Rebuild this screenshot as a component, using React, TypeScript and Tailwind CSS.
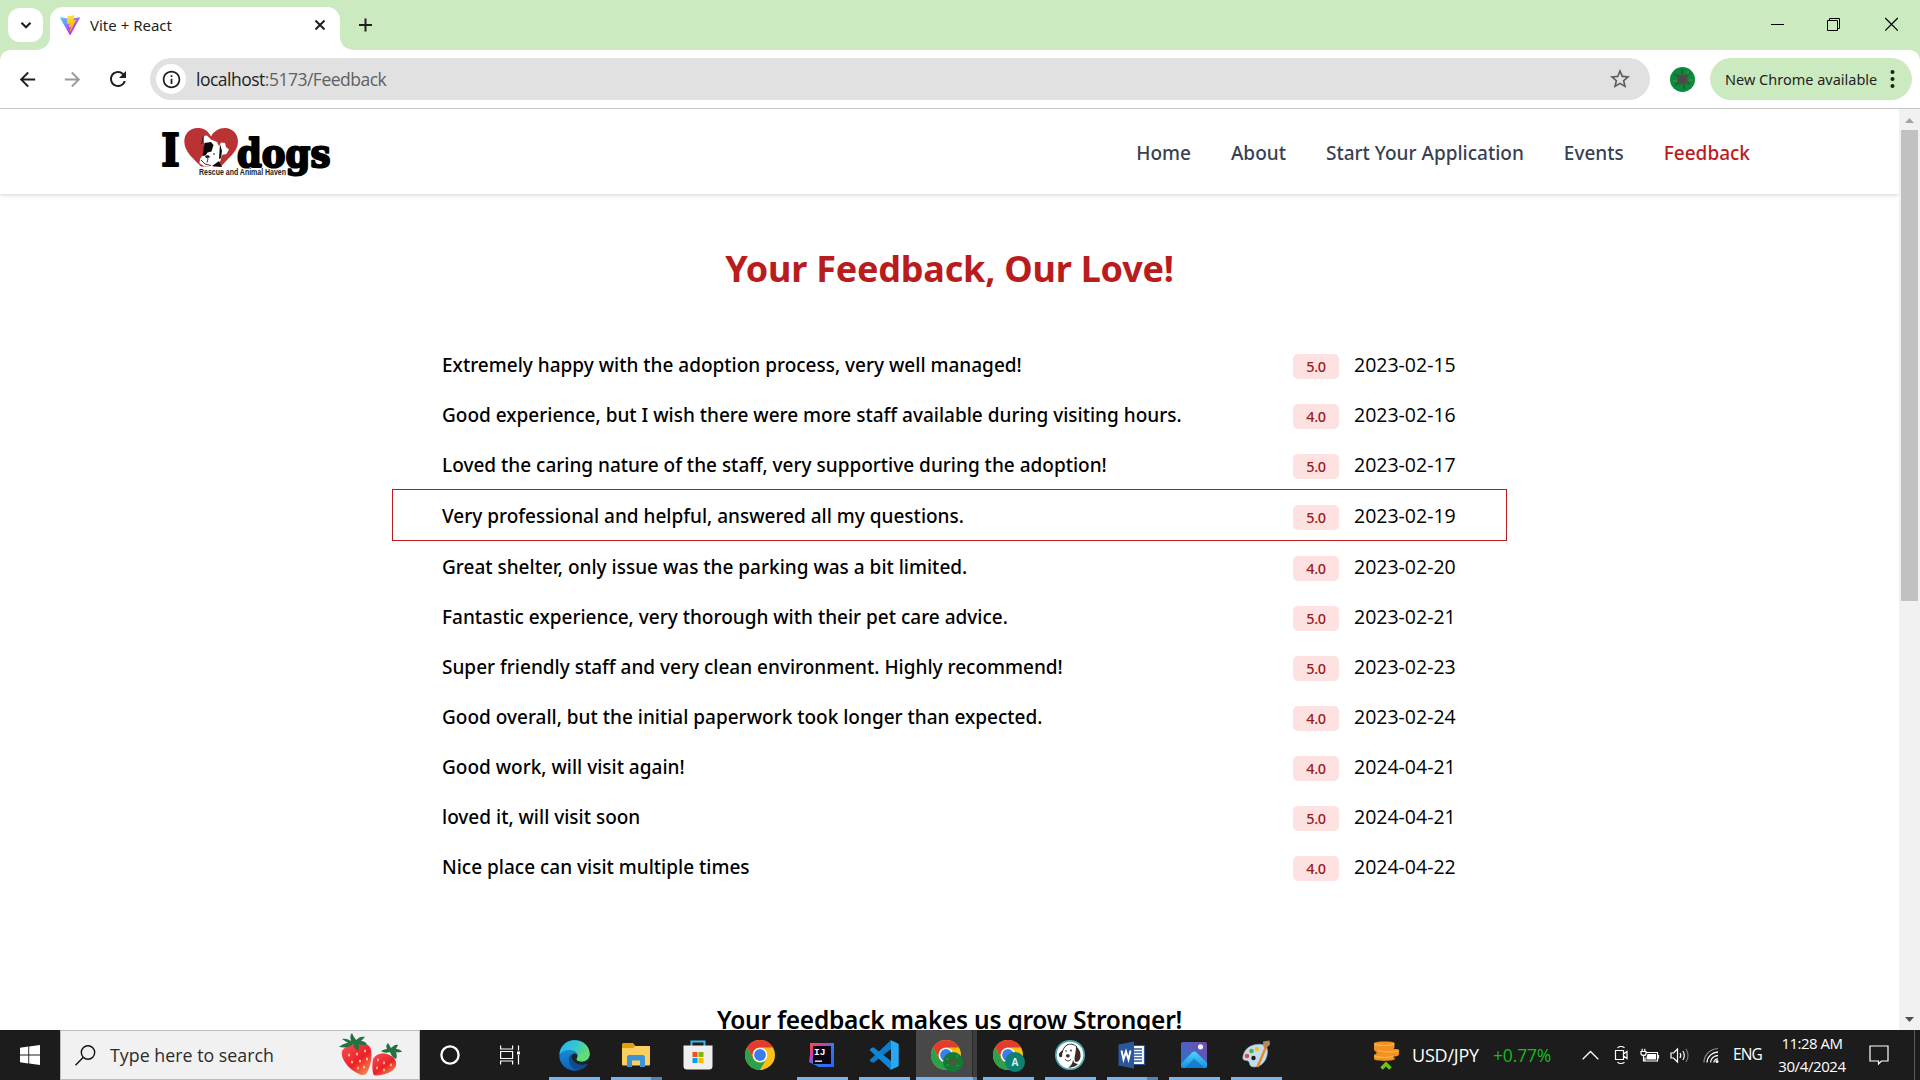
import type { ReactNode } from "react";
import { MdArrowBack, MdArrowForward, MdRefresh, MdStarBorder, MdInfoOutline } from "react-icons/md";

const feedback = [
  { text: "Extremely happy with the adoption process, very well managed!", rating: "5.0", date: "2023-02-15" },
  { text: "Good experience, but I wish there were more staff available during visiting hours.", rating: "4.0", date: "2023-02-16" },
  { text: "Loved the caring nature of the staff, very supportive during the adoption!", rating: "5.0", date: "2023-02-17" },
  { text: "Very professional and helpful, answered all my questions.", rating: "5.0", date: "2023-02-19", active: true },
  { text: "Great shelter, only issue was the parking was a bit limited.", rating: "4.0", date: "2023-02-20" },
  { text: "Fantastic experience, very thorough with their pet care advice.", rating: "5.0", date: "2023-02-21" },
  { text: "Super friendly staff and very clean environment. Highly recommend!", rating: "5.0", date: "2023-02-23" },
  { text: "Good overall, but the initial paperwork took longer than expected.", rating: "4.0", date: "2023-02-24" },
  { text: "Good work, will visit again!", rating: "4.0", date: "2024-04-21" },
  { text: "loved it, will visit soon", rating: "5.0", date: "2024-04-21" },
  { text: "Nice place can visit multiple times", rating: "4.0", date: "2024-04-22" },
];

function ViteLogo() {
  return (
    <svg width="20" height="20" viewBox="0 0 256 257">
      <defs>
        <linearGradient id="viteA" x1="-.8%" x2="57.6%" y1="7.6%" y2="78.4%">
          <stop offset="0" stopColor="#41D1FF" />
          <stop offset="1" stopColor="#BD34FE" />
        </linearGradient>
        <linearGradient id="viteB" x1="43.4%" x2="50.3%" y1="2.2%" y2="89%">
          <stop offset="0" stopColor="#FFEA83" />
          <stop offset=".083" stopColor="#FFDD35" />
          <stop offset="1" stopColor="#FFA800" />
        </linearGradient>
      </defs>
      <path fill="url(#viteA)" d="M255.153 37.938L134.897 252.976c-2.483 4.44-8.862 4.466-11.382.048L.875 37.958c-2.746-4.814 1.371-10.646 6.827-9.67l120.385 21.517a6.537 6.537 0 0 0 2.322-.004l117.867-21.483c5.438-.991 9.574 4.796 6.877 9.62Z" />
      <path fill="url(#viteB)" d="M185.432.063L96.44 17.501a3.268 3.268 0 0 0-2.634 3.014l-5.474 92.456a3.268 3.268 0 0 0 3.997 3.378l24.777-5.718c2.318-.535 4.413 1.507 3.936 3.838l-7.361 36.047c-.495 2.426 1.782 4.5 4.151 3.78l15.304-4.649c2.372-.72 4.652 1.36 4.15 3.788l-11.698 56.621c-.732 3.542 3.979 5.473 5.943 2.437l1.313-2.028l72.516-144.72c1.215-2.423-.88-5.186-3.54-4.672l-25.505 4.922c-2.396.462-4.435-1.77-3.759-4.114l16.646-57.705c.677-2.35-1.37-4.583-3.769-4.113Z" />
    </svg>
  );
}

function TabStrip() {
  return (
    <div className="flex h-[50px] items-start bg-[#cbeabf]">
      <button className="mt-2 ml-2 flex h-[34px] w-[35px] items-center justify-center rounded-[12px] bg-white">
        <svg width="12" height="12" viewBox="0 0 12 12" fill="none" stroke="#1f1f1f" strokeWidth="2.1">
          <path d="M1.5 3.7 6 8.2l4.500-4.500" />
        </svg>
      </button>
      <svg className="mt-[36px] -ml-[8px]" width="15" height="14" viewBox="0 0 15 14" fill="#fff">
        <path d="M15 0v14H0c9 0 15-5 15-14z" />
      </svg>
      <div className="mt-[7px] flex h-[43px] w-[290px] items-center rounded-t-[13px] bg-white pl-[10px]">
        <div className="mb-[7px]"><ViteLogo /></div>
        <span className="mb-[7px] ml-[10px] w-[200px] text-[15px] leading-5 text-[#1f1f1f]">Vite + React</span>
        <svg className="mb-[7px] ml-[25px]" width="10" height="10" viewBox="0 0 10 10" stroke="#1f1f1f" strokeWidth="2">
          <path d="M.5.500 9.500 9.500M9.500.500.500 9.500" />
        </svg>
      </div>
      <svg className="mt-[36px]" width="15" height="14" viewBox="0 0 15 14" fill="#fff">
        <path d="M0 0v14h15C6 14 0 9 0 0z" />
      </svg>
      <svg className="mt-[18px] ml-[4px]" width="13" height="14" viewBox="0 0 13 14" stroke="#1f1f1f" strokeWidth="2">
        <path d="M6.500.5v13M0 7h13" />
      </svg>
      <div className="mt-[17px] ml-auto flex items-center gap-[43px] pr-[22px]">
        <svg width="13" height="14" viewBox="0 0 13 14" stroke="#000"><path d="M0 7.500h13" /></svg>
        <svg className="mr-[2px]" width="13" height="14" viewBox="0 0 13 14" fill="none" stroke="#000">
          <path d="M.5 3.500h10v10H.500zM2.500 3V1.500h10v10H11" />
        </svg>
        <svg width="13" height="14" viewBox="0 0 13 14" stroke="#000" strokeWidth="1.200"><path d="m.2 1 12.600 12.600M12.800 1 .200 13.600" /></svg>
      </div>
    </div>
  );
}

function Toolbar() {
  return (
    <div className="bg-[#cbeabf]">
      <div className="flex h-[59px] items-center rounded-t-[10px] border-b border-[#c6c6c6] bg-white text-[#1f1f1f]">
        <MdArrowBack className="ml-[16px]" size={23} />
        <MdArrowForward className="ml-[22px] text-[#9a9a9a]" size={23} />
        <MdRefresh className="ml-[22px]" size={24} />
        <div className="ml-[20px] flex h-[42px] w-[1500px] items-center rounded-full bg-[#e1e1e1] px-[6px]">
          <span className="flex h-[30px] w-[30px] items-center justify-center rounded-full bg-white">
            <MdInfoOutline size={21} />
          </span>
          <span className="ml-[10px] font-['Open_Sans',sans-serif] text-[17.500px] leading-[24px] tracking-[-0.500px] text-[#5f6062]">
            <span className="text-[#1f1f1f]">localhost</span>:5173/Feedback
          </span>
          <MdStarBorder className="mr-[12px] ml-auto text-[#5a5c5e]" size={24} />
        </div>
        <svg className="ml-[20px]" width="25" height="25" viewBox="0 0 25 25">
          <circle cx="12.500" cy="12.500" r="12.500" fill="#0a8a3e" />
          <path d="M4 8h4v3M20 6l-3 3M5 18l4-3M14 22v-5M20 17l-4-2M12 2v5" stroke="#0b5d2a" strokeWidth="1.100" fill="none" />
          <path d="M3 14h4M18 4v4M19 13h4" stroke="#6d8f2a" strokeWidth=".9" />
          <rect x="7.500" y="7.500" width="10" height="10" rx="1" fill="#5c5136" />
          <rect x="8.500" y="8.500" width="8" height="8" fill="#4b4b4b" />
        </svg>
        <button className="ml-[15px] flex h-[42px] w-[202px] items-center rounded-full bg-[#cbeabf] pl-[15px]">
          <span className="text-[14.500px] leading-5 whitespace-nowrap">New Chrome available</span>
          <svg className="mr-[17px] ml-auto" width="5" height="18" viewBox="0 0 5 18" fill="#1f1f1f">
            <circle cx="2.500" cy="2" r="2" /><circle cx="2.500" cy="9" r="2" /><circle cx="2.500" cy="16" r="2" />
          </svg>
        </button>
      </div>
    </div>
  );
}

function SiteLogo() {
  return (
    <svg className="overflow-visible" width="172" height="54" viewBox="0 0 172 54">
      <g fontFamily="DejaVu Serif, serif" fontWeight="700" stroke="#000" strokeWidth="2.200" strokeLinejoin="round">
        <text x="1.300" y="40.500" fontSize="44" textLength="18.500" lengthAdjust="spacingAndGlyphs">I</text>
        <text x="77" y="42" fontSize="38.500" textLength="93.500" lengthAdjust="spacingAndGlyphs">dogs</text>
      </g>
      <path fill="#b93234" d="M51 11.500C47 4 42 3 37.500 3 30 3 24.300 8.700 24.300 16.500 24.300 27 34 34 41 41.500h20C68 33 78 27 78 16.500 78 8.700 72 3 65 3c-6 0-11 3-14 8.500z" />
      <path fill="#fff" d="m43.500 11 3.500-.5 4 4 6 2.500 2 4 2-3.500 4 .5 1 4 3 2.500-2.500 4.500-4.500 1-2 7-8 5-8-1-4.500-2.500.5-4.500 3-4 1.500-9z" />
      <path fill="#0b0b0b" d="M44.500 18 51 17l2.500 3-2 6.500-4 1-2 3-3 .5 1-7zM60 19l2 7-1 7-2 1 .5-8zM52 41l7-5 3 6z" />
      <path fill="none" stroke="#222" strokeWidth=".9" d="m41 35 4 4 6 1.500M45 31.500l3 2 2-2M48 34l-1 3.500M43.500 11l-2 8" />
      <ellipse cx="47.500" cy="31.500" rx="1.800" ry="1.300" fill="#111" />
      <circle cx="54" cy="29" r=".8" fill="#111" />
      <text x="39" y="50" fontSize="8.500" fontFamily="Liberation Sans, sans-serif" fontWeight="700" fill="#222" stroke="#fff" strokeWidth="1" paintOrder="stroke" textLength="87" lengthAdjust="spacingAndGlyphs">Rescue and Animal Haven</text>
    </svg>
  );
}

const navItem = "text-[#374151]";
function Navbar() {
  return (
    <header className="flex h-[85px] shrink-0 items-center justify-between bg-white pr-[149px] pl-[160px] shadow-[0_1px_4px_rgba(0,0,0,0.18)]">
      <SiteLogo />
      <nav className="flex gap-[40px] pt-[2px] text-[19px] leading-[26px] font-medium">
        <a className={navItem}>Home</a>
        <a className={navItem}>About</a>
        <a className={navItem}>Start Your Application</a>
        <a className={navItem}>Events</a>
        <a className="text-[#b91c1c]">Feedback</a>
      </nav>
    </header>
  );
}

function FeedbackRow({ text, rating, date, active }: { text: string; rating: string; date: string; active?: boolean }) {
  return (
    <li className={active ? "flex h-[52px] items-center border border-[#b91c1c] pr-[50px] pl-[49px]" : "flex h-[50px] items-center pr-[51px] pl-[50px]"}>
      <span className="pt-[2px] text-[19px] leading-[26px] font-medium">{text}</span>
      <span className="mt-[5px] ml-auto flex h-[25px] w-[46px] items-center justify-center rounded-[5px] bg-[#fee2e2] pt-px text-[14.500px] font-medium tracking-[-0.300px] text-[#991b1b]">
        {rating}
      </span>
      <span className="ml-[15px] w-[102px] pt-[2px] font-['Open_Sans',sans-serif] text-[19.500px] leading-[26px] whitespace-nowrap">{date}</span>
    </li>
  );
}

function Scrollbar() {
  return (
    <div className="flex w-[21px] flex-col items-center bg-[#f1f1f1]">
      <svg className="mt-[9px]" width="9" height="5" viewBox="0 0 9 5" fill="#a3a3a3"><path d="M0 5 4.500 0 9 5z" /></svg>
      <div className="mt-[7px] h-[471px] w-[17px] bg-[#c1c1c1]" />
      <svg className="mt-auto mb-[8px]" width="9" height="5" viewBox="0 0 9 5" fill="#505050"><path d="M0 0h9L4.500 5z" /></svg>
    </div>
  );
}

function ChromeIcon({ children }: { children?: ReactNode }) {
  return (
    <svg width="34" height="34" viewBox="0 0 34 34">
      <circle cx="15" cy="16" r="15" fill="#fbc116" />
      <path fill="#e33b2e" d="M2 8.500a15 15 0 0 1 26 0H15a7.500 7.500 0 0 0-6.500 11.200z" />
      <path fill="#2da04b" d="M2 8.500 8.500 19.700A7.500 7.500 0 0 0 15 23.500a7 7 0 0 0 6.500-3.800L15 31A15 15 0 0 1 2 8.500z" />
      <circle cx="15" cy="16" r="7.300" fill="#fff" />
      <circle cx="15" cy="16" r="5.900" fill="#3c7ded" />
      {children}
    </svg>
  );
}

function EdgeIcon() {
  return (
    <svg width="31" height="31" viewBox="0 0 256 256">
      <defs>
        <linearGradient id="edgeTop" x1="0" y1=".3" x2="1" y2=".6">
          <stop offset="0" stopColor="#2bb3e8" /><stop offset=".5" stopColor="#37c6d0" /><stop offset="1" stopColor="#70e05a" />
        </linearGradient>
        <linearGradient id="edgeLeft" x1=".4" y1="0" x2=".5" y2="1">
          <stop offset="0" stopColor="#1b9de2" /><stop offset="1" stopColor="#0c5fb5" />
        </linearGradient>
      </defs>
      <circle cx="128" cy="128" r="125" fill="url(#edgeLeft)" />
      <path fill="url(#edgeTop)" d="M4 118C10 45 65 3 128 3c75 0 125 52 125 108 0 42-32 66-66 66-26 0-42-8-42-18 0-8 10-12 10-29 0-24-26-48-66-48-42 0-70 16-85 36z" />
      <path fill="#0f4a8e" d="M100 118c-12 12-20 30-18 52 4 44 42 82 90 76 30-6 56-28 68-52 2-5-2-8-7-5-40 22-110 12-128-30-5-14-8-28-5-41z" />
      <path fill="#1c1c1c" d="M252 130c-4 30-32 52-65 47-26 0-42-8-42-18 0-8 12-14 9-34-14-22-40-16-51 2-8 50 50 80 94 77 30-2 44-10 48-9 8-14 12-36 7-65z" opacity=".9" />
      <path fill="#62dd72" d="M253 111c0 42-32 66-66 66-26 0-42-8-42-18 0-8 12-14 9-34 40-20 80-20 99-14z" />
    </svg>
  );
}

function FolderIcon() {
  return (
    <svg width="30" height="26" viewBox="0 0 30 26">
      <path fill="#e3a008" d="M1 2.500C1 1.700 1.700 1 2.500 1H12l2.500 3H28v8H1z" />
      <path fill="#fbd061" d="M1 6h11l2.500-2H29v18.500a1 1 0 0 1-1 1H2a1 1 0 0 1-1-1z" />
      <path fill="#3b93d8" d="M6 25V15.500C6 14 7 13 8.500 13h13c1.500 0 2.500 1 2.500 2.500V25h-5v-6.500h-8V25z" />
    </svg>
  );
}

function StoreIcon() {
  return (
    <svg width="30" height="30" viewBox="0 0 30 30">
      <path d="M8.500 6.500V1.500h13v5" fill="none" stroke="#38b6ef" strokeWidth="2" />
      <path d="M.5 5.500h29V26a3.500 3.500 0 0 1-3.500 3.500H4A3.500 3.500 0 0 1 .5 26z" fill="#efefef" />
      <path fill="#f1511b" d="M9.500 12h5v5h-5z" /><path fill="#80bb01" d="M15.500 12h5v5h-5z" />
      <path fill="#00a3ee" d="M9.500 18h5v5h-5z" /><path fill="#fbb800" d="M15.500 18h5v5h-5z" />
    </svg>
  );
}

function IntelliJIcon() {
  return (
    <svg width="26" height="26" viewBox="0 0 26 26">
      <defs>
        <linearGradient id="ij" x1="0" y1="0" x2="1" y2="1">
          <stop offset="0" stopColor="#ee5a3a" /><stop offset=".25" stopColor="#e8368f" /><stop offset=".55" stopColor="#2f7bf6" /><stop offset="1" stopColor="#2b63ee" />
        </linearGradient>
      </defs>
      <path fill="url(#ij)" d="M1 1h24v24H10L0 20 1 12z" />
      <path fill="#0c0413" d="M4 4h18v18H4z" />
      <text x="5" y="13" fontSize="9.500" fontWeight="700" fill="#fff" fontFamily="Liberation Mono, monospace">IJ</text>
      <path fill="#fff" d="M6 18.500h7v1.300H6z" />
    </svg>
  );
}

function VsCodeIcon() {
  return (
    <svg width="30" height="30" viewBox="0 0 30 30">
      <path fill="#0d7dcb" d="M22 0.500v8.500L4.500 22.800 2.300 22 .5 20.200 21 .9z" />
      <path fill="#0f87d8" d="M.5 10 2.300 8l2.200-.7L22 21v8.500L21 29z" />
      <path fill="#29a7f2" d="M22 .2 29 3.500c.5.300.7.700.7 1.200v20.600c0 .5-.2 1-.7 1.200L22 29.800c-.6.200-1 0-1.300-.3.700.4 1.300 0 1.300-.8V1.300C22 .5 21.400.1 20.700.5 21 .2 21.400 0 22 .2z" />
    </svg>
  );
}

function DogIcon() {
  return (
    <svg width="30" height="30" viewBox="0 0 30 30">
      <circle cx="15" cy="15" r="14.200" fill="#fff" stroke="#46a8ae" strokeWidth="1.700" />
      <path fill="none" stroke="#3a2b25" strokeWidth="1" d="M12 5c-3 1.500-4 5-5 8M12 5c3-1.500 7-1 10 2M10 19c1.500 2.500 4 2.500 6 .5" />
      <path fill="#3a2b25" d="M21 6.500c3 2 5 5.500 4.500 10.500-.3 3-2.500 5-4.800 5-1.700-1.500-1.200-4.500-.7-7 .5-3 1-5 1-8.500zM4 13.500 7.500 10 7.200 16c-.7 2-3 1.500-3.200-.5zM11 15c1-1 3.200-1 3.700.2.200 1.600-.9 2.400-2 2.300-1.200-.2-2-1.200-1.700-2.500zM13 27.500c3-1.500 4.500-4 5-7.500l1.500 3 3.500 1c-2 2.500-6 4-10 3.500z" />
      <circle cx="11" cy="11" r=".8" fill="#3a2b25" /><circle cx="16" cy="10.500" r=".9" fill="#3a2b25" />
    </svg>
  );
}

function WordIcon() {
  return (
    <svg width="28" height="28" viewBox="0 0 28 28">
      <path fill="#fff" stroke="#2b579a" strokeWidth="1.200" d="M14 4.500h12.500v19H14z" />
      <path stroke="#2b579a" strokeWidth="1.500" d="M15 8h9M15 11h9M15 14h9M15 17h9M15 20h9" />
      <path fill="#2b579a" d="M.5 3.500 16 .5v27L.5 24.500z" />
      <path d="m3.500 9.500 2 9 2.500-8 2.500 8 2-9" stroke="#fff" strokeWidth="1.900" fill="none" />
    </svg>
  );
}

function PhotosIcon() {
  return (
    <svg width="26" height="26" viewBox="0 0 26 26">
      <defs>
        <linearGradient id="phBg" x1="0" y1="1" x2="1" y2="0"><stop offset="0" stopColor="#1f78d6" /><stop offset="1" stopColor="#7a4aa6" /></linearGradient>
        <linearGradient id="phHill" x1="0" y1="0" x2="0" y2="1"><stop offset="0" stopColor="#4fd6fb" /><stop offset="1" stopColor="#1590e0" /></linearGradient>
      </defs>
      <rect width="26" height="26" rx="2" fill="url(#phBg)" />
      <path fill="url(#phHill)" d="M0 22 11 10.500c1.500-1.500 3-1.500 4.500 0L26 21v3a2 2 0 0 1-2 2H2a2 2 0 0 1-2-2z" />
      <path fill="#0f70ca" d="m4 26 9-9.500L23.500 26z" opacity=".7" />
      <circle cx="19.500" cy="4.800" r="2.600" fill="#e9f3ff" />
    </svg>
  );
}

function PaintIcon() {
  return (
    <svg width="30" height="30" viewBox="0 0 30 30">
      <path fill="#c4dcec" stroke="#8fb0c6" strokeWidth=".6" d="M3 13C6 6 14 3.500 21 4.500c5 1 6.500 5 5 11-1.500 7-7 11.500-13 11.500-4.500 0-4-3-5-5s-3-1-5-2c-2-1.200-1-4.500 0-7z" />
      <circle cx="6" cy="16" r="2.300" fill="#e34b3c" /><circle cx="10.500" cy="11" r="2.300" fill="#4bb14c" />
      <circle cx="16" cy="9" r="2.300" fill="#f0c52e" /><circle cx="12.500" cy="18" r="2.200" fill="#1c1c1c" />
      <path stroke="#e58a24" strokeWidth="2.400" d="M25 7 16.500 27" />
      <path fill="#b78a55" d="m22 1.500 6.500-1 .5 4-4.500 4.500-2-2.500z" />
    </svg>
  );
}

function Strawberries() {
  return (
    <svg width="64" height="44" viewBox="0 0 64 44">
      <defs>
        <linearGradient id="berry" x1="0" y1="0" x2=".8" y2="1"><stop offset="0" stopColor="#f5515b" /><stop offset=".6" stopColor="#ee1f2c" /><stop offset="1" stopColor="#f58a52" /></linearGradient>
      </defs>
      <path fill="url(#berry)" d="M4 18c3-6 21-11 27-5 5 5 2 22-3 28-2 2-5 1-8-.5C12 37 2 26 4 18z" />
      <path fill="url(#berry)" d="M35 26c3-5 9-7 14-5 7 2 10 7 9 12-2 6-14 10-21 9.500-3-.5-3-10-2-16.500z" />
      <g fill="#fbd667">
        <ellipse cx="11" cy="22" rx="1" ry="1.600" /><ellipse cx="19" cy="21" rx="1" ry="1.600" /><ellipse cx="27" cy="18" rx="1" ry="1.600" />
        <ellipse cx="14" cy="29" rx="1" ry="1.600" /><ellipse cx="22" cy="28" rx="1" ry="1.600" /><ellipse cx="29" cy="26" rx="1" ry="1.600" />
        <ellipse cx="20" cy="35" rx="1" ry="1.600" /><ellipse cx="26" cy="34" rx="1" ry="1.600" />
        <ellipse cx="40" cy="27" rx=".9" ry="1.400" /><ellipse cx="46" cy="30" rx=".9" ry="1.400" /><ellipse cx="53" cy="32" rx=".9" ry="1.400" />
        <ellipse cx="39" cy="35" rx=".9" ry="1.400" /><ellipse cx="46" cy="37" rx=".9" ry="1.400" />
      </g>
      <path fill="#23723f" d="M1 14c4-3 6-4 9-4L4 6c4-1 7 1 9 2-1-4-1-6 1-8 1 3 3 5 4 7 3-3 6-4 9-3-2 2-3 3-4 4 3 0 5 1 6 4-4 0-6 0-8-1 0 3 0 5-1 7-3-2-4-4-5-7-3 3-6 4-14 3z" />
      <path fill="#23723f" d="M43 18c2-1 4-2 6-2-1-2-1-4 1-6l3 5c3-3 5-4 7-3l-2 4c3 0 5 1 6 3-3 0-4 1-6 0 1 3 1 5 0 7-3-1-5-4-6-7-3 1-6 1-9-1z" />
    </svg>
  );
}

type AppEntry = { icon: ReactNode; open?: boolean; stacked?: boolean; active?: boolean };
const apps: AppEntry[] = [
  { icon: <EdgeIcon />, open: true },
  { icon: <FolderIcon />, open: true, stacked: true },
  { icon: <StoreIcon /> },
  { icon: <span className="pt-[2px] pl-[4px]"><ChromeIcon /></span> },
  { icon: <IntelliJIcon />, open: true },
  { icon: <VsCodeIcon />, open: true },
  {
    icon: (
      <span className="pt-[2px] pl-[4px]">
        <ChromeIcon>
          <circle cx="22" cy="23" r="10" fill="#127a34" />
          <path d="M15 20h3M26 16v3M15 27l3-2M28 27l-3-1" stroke="#3f9a3a" />
          <rect x="18.500" y="19.500" width="7" height="7" rx="1" fill="#4b5a3c" />
        </ChromeIcon>
      </span>
    ),
    open: true, stacked: true, active: true,
  },
  {
    icon: (
      <span className="pt-[2px] pl-[4px]">
        <ChromeIcon>
          <circle cx="22" cy="23" r="10" fill="#0d8274" />
          <text x="22" y="26.500" fontSize="10" fontWeight="700" fill="#d5eeea" textAnchor="middle" fontFamily="Noto Sans, sans-serif">A</text>
        </ChromeIcon>
      </span>
    ),
    open: true,
  },
  { icon: <DogIcon />, open: true },
  { icon: <WordIcon />, open: true, stacked: true },
  { icon: <PhotosIcon />, open: true },
  { icon: <PaintIcon />, open: true },
];

function AppSlot({ icon, open, stacked, active }: AppEntry) {
  return (
    <div className={active ? "relative flex h-[50px] w-[62px] items-center justify-center bg-[linear-gradient(to_right,transparent_1px,#484848_1px,#484848_57px,#2a2a2a_57px,#2a2a2a_58px,#3c3c3c_58px)]" : "relative flex h-[50px] w-[62px] items-center justify-center"}>
      {icon}
      {open && (
        <div className={active ? "absolute bottom-0 left-[1px] flex h-[3px] w-[61px]" : "absolute bottom-0 left-[6px] flex h-[3px] w-[51px]"}>
          <div className="grow bg-[#76b5ed]" />
          {stacked && <div className={active ? "w-[4px] bg-[#5583ab]" : "w-[11px] bg-[#5583ab]"} />}
        </div>
      )}
    </div>
  );
}

function Tray() {
  return (
    <div className="ml-auto flex h-[50px] items-center font-['Open_Sans',sans-serif] text-white">
      <svg width="27" height="30" viewBox="0 0 27 30">
        <path fill="#f39222" d="M1 3.500C1 1 20 1 21.500 3v4.500l-1 1.500C26 8.500 27 10 26 11.500v3c-1 2-4 2-6 2l2 2v.5C20 21.500 2 21.500 1 19v-4l3-2-3-3z" />
        <path stroke="#ffb650" strokeWidth="1.200" fill="none" d="M1.500 4c3 2 17 2 19.500 0M5 10.500c5 1.500 16 2 20 .5M1.500 16c3 2 15 2 19 0" />
        <path stroke="#6cc418" strokeWidth="3.500" fill="none" d="m8.500 28.500 4.500-4.500 4.500 4.500" />
      </svg>
      <span className="ml-[12px] w-[81px] text-[18px] tracking-[-0.200px]">USD/JPY</span>
      <span className="w-[76px] text-[17.500px] tracking-[-0.150px] text-[#17bd17]">+0.77%</span>
      <svg className="ml-[13px]" width="17" height="10" viewBox="0 0 17 10" fill="none" stroke="#fff" strokeWidth="1.300"><path d="m.7 9.300 7.800-7.800 7.800 7.800" /></svg>
      <svg className="ml-[15px]" width="15" height="18" viewBox="0 0 15 18" fill="none" stroke="#fff" strokeWidth="1.200">
        <path d="M1.500 4.500h8v9h-8zM9.500 8 13 5.500v7L9.500 10M3.500 1.800C5.500.3 8.500.3 10.500 1.800M3.500 16.200c2 1.500 5 1.500 7 0" />
      </svg>
      <svg className="ml-[11px]" width="20" height="15" viewBox="0 0 20 15" fill="none" stroke="#fff" strokeWidth="1.200">
        <path d="M6 4.500h11.500v8.500H5V9.500M18.500 7v3.500M1 3.500h5v2.200C6 8 1 8 1 5.700zM2.200 3.500V.8M4.800 3.500V.8M3.500 7.500V13h1.500" />
        <path fill="#fff" stroke="none" d="M7.500 6H16v5.500H6.500V9z" />
      </svg>
      <svg className="ml-[10px]" width="20" height="17" viewBox="0 0 20 17" fill="none" stroke="#fff" strokeWidth="1.200">
        <path d="M1 6h2.500L7.500 2v13l-4-4H1zM10 6c1 1.500 1 3.500 0 5M12.800 4c2 2.500 2 6.500 0 9" />
        <path d="M15.800 1.800c3 4 3 9.500 0 13.400" stroke="#777" />
      </svg>
      <svg className="ml-[13px]" width="17" height="17" viewBox="0 0 17 17" fill="none">
        <path stroke="#8a8a8a" strokeWidth="1.200" d="M1 15.500C1 8 7 2 15 1.500" />
        <path stroke="#fff" strokeWidth="1.300" d="M4 15.500c.3-6 5-10.200 11-10.500M7.500 15.500c.3-4 3.500-6.800 7.500-7M10.800 15.500c.3-2 2-3.500 4.200-3.600" />
        <circle cx="14" cy="14.500" r="1.500" fill="#fff" />
      </svg>
      <span className="ml-[13px] w-[44px] text-[15.500px] tracking-[-0.900px]">ENG</span>
      <div className="w-[70px] text-center text-[15px] leading-[23px] tracking-[-0.400px] whitespace-nowrap">
        <div className="tracking-[-0.500px]">11:28 AM</div>
        <div>30/4/2024</div>
      </div>
      <svg className="ml-[22px]" width="20" height="20" viewBox="0 0 20 20" fill="none" stroke="#fff" strokeWidth="1.200">
        <path d="M1 1h18v15h-6.500L9.500 19v-3H1z" />
      </svg>
      <div className="mr-[5px] ml-[25px] h-[50px] w-px bg-[#5a5a5a]" />
    </div>
  );
}

function Taskbar() {
  return (
    <footer className="flex h-[50px] items-center bg-[#1c1c1c]">
      <div className="flex w-[60px] justify-center">
        <svg width="20" height="20" viewBox="0 0 20 20" fill="#fff">
          <path d="M0 2.800 8.300 1.600v8H0zM9.200 1.500 20 0v9.600H9.200zM0 10.400h8.300v8L0 17.200zM9.200 10.400H20V20L9.200 18.500z" />
        </svg>
      </div>
      <div className="flex h-[50px] w-[360px] items-center border border-[#bcbcbc] bg-[#f1f1f1] pl-[14px]">
        <svg width="21" height="21" viewBox="0 0 21 21" fill="none" stroke="#111" strokeWidth="1.400">
          <circle cx="13" cy="7.500" r="6.700" /><path d="M8.300 12.300.5 20.300" />
        </svg>
        <span className="ml-[14px] w-[170px] pt-px font-['Open_Sans',sans-serif] text-[17.800px] tracking-[0.020px] text-[#2b2b2b]">Type here to search</span>
        <span className="ml-[58px]"><Strawberries /></span>
      </div>
      <div className="flex w-[60px] justify-center">
        <svg width="20" height="20" viewBox="0 0 20 20" fill="none" stroke="#fff" strokeWidth="2.300"><circle cx="10" cy="10" r="8.600" /></svg>
      </div>
      <div className="flex w-[63px] pl-[20px]">
        <svg width="21" height="20" viewBox="0 0 21 20" fill="none" stroke="#fff" strokeWidth="1.200">
          <path d="M.6.500V4h12V.500M.6 19.500V16h12v3.500M.6 6.500h12v7H.600zM18.500.500v5M18.500 10v9.500" />
          <path fill="#fff" stroke="none" d="M17 6.500h3v3h-3z" />
        </svg>
      </div>
      {apps.map((app, i) => <AppSlot key={i} {...app} />)}
      <Tray />
    </footer>
  );
}

export default function App() {
  return (
    <div className="flex h-[1080px] w-[1920px] flex-col overflow-hidden bg-white font-['Noto_Sans','Open_Sans',sans-serif] text-black">
      <TabStrip />
      <Toolbar />
      <div className="flex h-[921px]">
        <div className="flex w-[1899px] flex-col overflow-hidden">
          <Navbar />
          <main className="flex shrink-0 flex-col items-center">
            <h1 className="mt-[50px] text-[36px] leading-[50px] font-bold tracking-[-0.230px] text-[#b91c1c]">Your Feedback, Our Love!</h1>
            <ul className="mt-[45px] w-[1115px]">
              {feedback.map((item, i) => <FeedbackRow key={i} {...item} />)}
            </ul>
            <h2 className="mt-[111px] text-[24.500px] leading-[36px] font-semibold tracking-[-0.250px]">Your feedback makes us grow Stronger!</h2>
          </main>
        </div>
        <Scrollbar />
      </div>
      <Taskbar />
    </div>
  );
}
